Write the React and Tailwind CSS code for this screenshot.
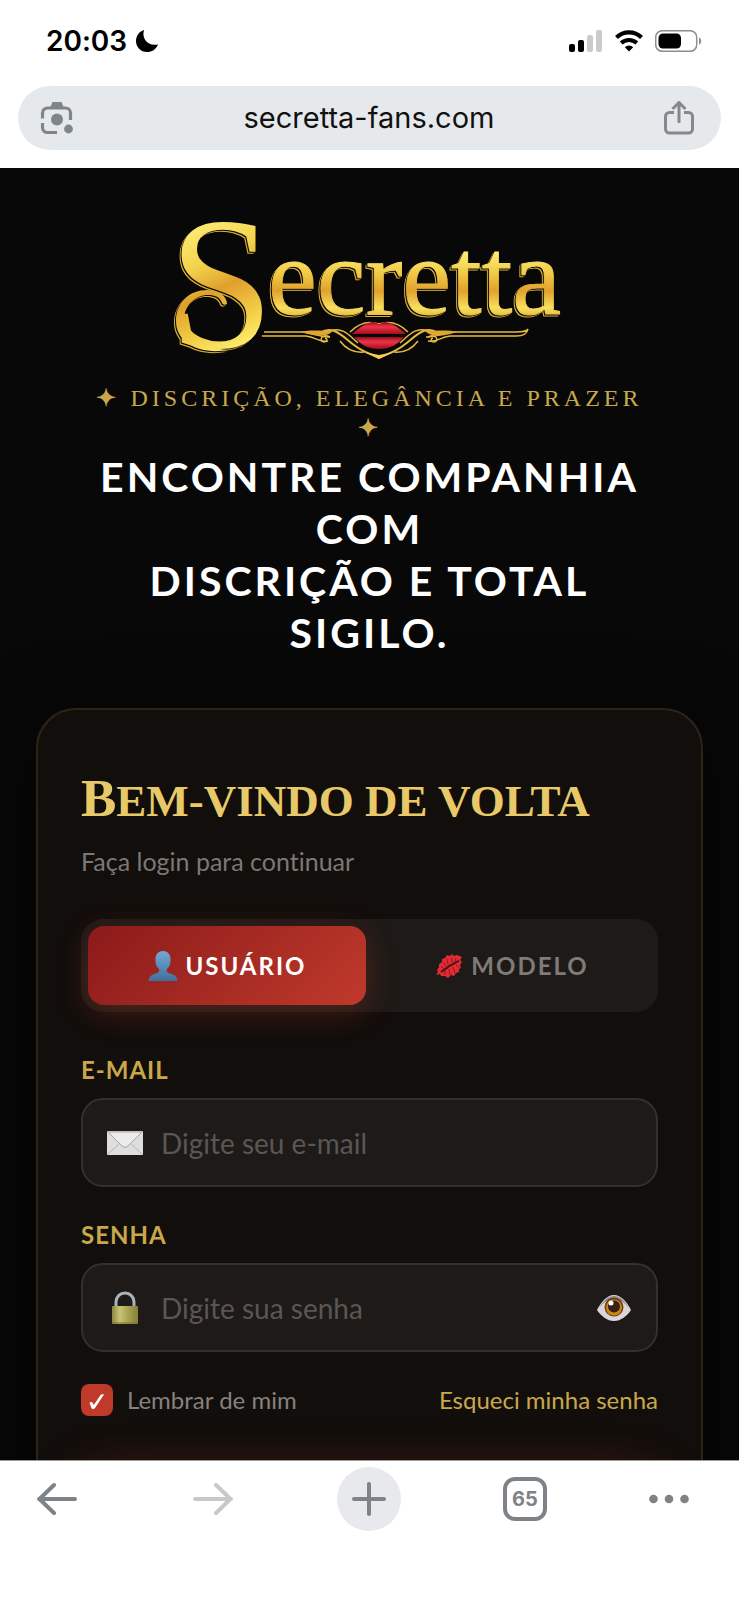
import { useState } from 'react'

const MoonIcon = () => (
  <svg width="24" height="24" viewBox="0 0 24 24" aria-hidden="true">
    <path d="M9 1C6.500 9 12 17.500 23 15.500C21 20.500 17 23 12 23C5.500 23 1 18 1 12C1 7 4 2.500 9 1Z" fill="#000" />
  </svg>
)

const StatusIcons = () => (
  <div className="flex items-center gap-3">
    <svg width="34" height="22" viewBox="0 0 34 22" aria-hidden="true">
      <rect x="0" y="14" width="6" height="8" rx="2" fill="#000" />
      <rect x="9" y="10" width="6" height="12" rx="2" fill="#000" />
      <rect x="18" y="5" width="6" height="17" rx="2" fill="#cbcbcb" />
      <rect x="27" y="0" width="6" height="22" rx="2" fill="#cbcbcb" />
    </svg>
    <svg width="28" height="22" viewBox="0 0 28 22" fill="none" aria-hidden="true">
      <path d="M1.500 7.500a18 18 0 0 1 25 0" stroke="#000" strokeWidth="4.200" />
      <path d="M6.200 13a11.300 11.300 0 0 1 15.600 0" stroke="#000" strokeWidth="4" />
      <path d="M14 21.500l-4.200-4.200a6 6 0 0 1 8.400 0z" fill="#000" />
    </svg>
    <svg width="48" height="22" viewBox="0 0 48 22" fill="none" aria-hidden="true">
      <rect x="0.700" y="0.700" width="41" height="20.600" rx="6.500" stroke="#8e8e8e" strokeWidth="1.500" />
      <rect x="3.500" y="3.500" width="22.500" height="15" rx="4.500" fill="#000" />
      <path d="M44 7.500c3 1 3 6 0 7z" fill="#8e8e8e" />
    </svg>
  </div>
)

const LensIcon = () => (
  <svg width="34" height="34" viewBox="0 0 34 34" fill="none" aria-hidden="true">
    <path d="M2.500 17.500v-5.500a5 5 0 0 1 5-5h18a5 5 0 0 1 5 5V19" stroke="#7f868b" strokeWidth="3.200" />
    <path d="M2.500 22v4.500a5 5 0 0 0 5 5H17" stroke="#7f868b" strokeWidth="3.200" />
    <path d="M10 7l2.500-6h9L24 7z" fill="#7f868b" />
    <circle cx="17" cy="18.500" r="6" fill="#7f868b" />
    <circle cx="28.500" cy="28" r="4.400" fill="#7f868b" />
  </svg>
)

const ShareIcon = () => (
  <svg width="30" height="34" viewBox="0 0 30 34" fill="none" stroke="#85898d" strokeWidth="3" aria-hidden="true">
    <path d="M10 11.500H5.500a4 4 0 0 0-4 4V28a4 4 0 0 0 4 4h19a4 4 0 0 0 4-4V15.500a4 4 0 0 0-4-4H20" />
    <path d="M15 22V2.500M8.500 8L15 1.500l6.500 6.500" />
  </svg>
)

const Logo = () => (
  <svg width="420" height="180" viewBox="0 0 420 180" role="img" aria-label="Secretta" className="max-w-full overflow-visible">
    <defs>
      <linearGradient id="goldBig" gradientUnits="userSpaceOnUse" x1="20" y1="20" x2="80" y2="150">
        <stop offset="0" stopColor="#fff27d" />
        <stop offset="0.350" stopColor="#f3d24d" />
        <stop offset="0.550" stopColor="#dfa02c" />
        <stop offset="0.800" stopColor="#f3cf48" />
        <stop offset="1" stopColor="#ffef72" />
      </linearGradient>
      <linearGradient id="gold" gradientUnits="userSpaceOnUse" x1="0" y1="50" x2="0" y2="118">
        <stop offset="0" stopColor="#fff27d" />
        <stop offset="0.350" stopColor="#f0c945" />
        <stop offset="0.600" stopColor="#e0a22e" />
        <stop offset="0.850" stopColor="#f8df5c" />
        <stop offset="1" stopColor="#e5b53c" />
      </linearGradient>
      <linearGradient id="lip" x1="0" y1="0" x2="0" y2="1">
        <stop offset="0" stopColor="#8e0f1c" />
        <stop offset="0.400" stopColor="#f0344a" />
        <stop offset="1" stopColor="#a30d1c" />
      </linearGradient>
    </defs>
    <g className="[filter:drop-shadow(-1px_1px_0_#0a0a0a)_drop-shadow(-1px_1px_0_#d8ac38)]">
      <text x="9" y="147" className="font-['Liberation_Serif',serif] text-[188px]" fill="url(#goldBig)">
        S<tspan x="108" y="114" className="text-[110px]" fill="url(#gold)" stroke="url(#gold)" strokeWidth="1">ecretta</tspan>
      </text>
      {/* curl that closes the lower end of the initial */}
      <path d="M68 150C40 155 16 143 16 121C16 102 30 90 47 90C59 90 67 96 67 104C65 105 63 105 62 103C60 97 55 95 48 95C36 95 24 105 24 120C24 137 41 148 68 150Z" fill="url(#goldBig)" />
    </g>
    <g fill="none" stroke="#e6b93f" strokeWidth="1.500">
      <path d="M104 132H142C154 132 158 138 170 137M102 136H146C156 137 160 143 168 141" />
      <path d="M368 129C366 132 362 132 356 132H294C282 132 278 138 266 137M368 129C367 135 362 136 356 136H290C280 137 276 143 268 141" />
      <path d="M160 133C174 124 184 138 194 145C204 153 212 154 219 158C226 154 234 153 244 145C254 138 264 124 278 133" strokeWidth="2" />
      <path d="M170 131C182 126 190 136 198 143M268 131C256 126 248 136 240 143" />
      <path d="M190 132C200 122 210 121 219 124C228 121 238 122 248 132" />
      <path d="M170 137c-8-4-12 4-6 5c3 0 4-3 1-4M268 137c8-4 12 4 6 5c-3 0-4-3-1-4" />
      <path d="M180 141c6 8 14 12 24 11M258 141c-6 8-14 12-24 11" />
    </g>
    <path d="M140 132C154 129 162 132 174 130C166 138 158 137 140 132Z" fill="#dca832" />
    <path d="M298 132C284 129 276 132 264 130C272 138 280 137 298 132Z" fill="#dca832" />
    <path d="M204 152L219 155L234 152L219 159Z" fill="#f6cf4e" />
    <path d="M192 134C200 127 207 122 213 122C216 122 218 124 219 124C220 124 222 122 225 122C231 122 238 127 246 134Z" fill="url(#lip)" />
    <path d="M194 137H244C237 145 230 149 219 149C208 149 201 145 194 137Z" fill="url(#lip)" />
  </svg>
)

const PersonIcon = () => (
  <svg width="30" height="30" viewBox="0 0 30 30" aria-hidden="true">
    <defs>
      <linearGradient id="person" x1="0" y1="0" x2="0" y2="1">
        <stop offset="0" stopColor="#74a9d2" />
        <stop offset="1" stopColor="#3f6f9e" />
      </linearGradient>
    </defs>
    <path d="M15 0c5 0 8 4 7.500 9c0 5-1.500 7-3.500 9c-1 2 0 4 3 4.500c4 1 7 2.500 7.500 7.500h-29c.500-5 3.500-6.500 7.500-7.500c3-.500 4-2.500 3-4.500c-2-2-3.500-4-3.500-9C7 4 10 0 15 0z" fill="url(#person)" />
  </svg>
)

const KissIcon = () => (
  <svg width="28" height="24" viewBox="0 0 28 24" aria-hidden="true">
    <path d="M1 21L3 18L2 16L4 13L4 10L7 8L7 5L10 4L12 1L15 2L17 0L19 2L22 1L27 3L25 6L27 8L25 11L26 14L24 15L24 18L21 19L19 22L16 21L13 24L10 22L6 22L5 20Z" fill="#e02b35" />
    <path d="M6 18C10 15 11 15 14 12C18 11 20 8 24 7" stroke="#4a1416" strokeWidth="2" fill="none" />
    <path d="M8 8l3 4M12 5l1 5M17 4v5M21 4l-1 4M10 17v4M14 15l1 6M18 13l2 6M21 11l3 3M6 12l3 3" stroke="#8e1720" strokeWidth="1" />
  </svg>
)

const EnvelopeIcon = () => (
  <svg width="36" height="24" viewBox="0 0 36 24" fill="none" aria-hidden="true">
    <rect width="36" height="24" rx="1" fill="#dedede" />
    <path d="M1 23l12-11M35 23L23 12" stroke="#b5b5b5" />
    <path d="M1 1l14 14q3 3 6 0L35 1z" fill="#ececec" stroke="#a5a5a5" />
  </svg>
)

const LockIcon = () => (
  <svg width="36" height="34" viewBox="0 0 36 34" fill="none" aria-hidden="true">
    <defs>
      <linearGradient id="lock" x1="0" y1="0" x2="1" y2="0">
        <stop offset="0" stopColor="#8c8742" />
        <stop offset="0.300" stopColor="#c9c377" />
        <stop offset="0.600" stopColor="#aaa455" />
        <stop offset="1" stopColor="#86803a" />
      </linearGradient>
    </defs>
    <path d="M9 16v-5a9 9 0 0 1 18 0v5" stroke="#a9b4be" strokeWidth="3" />
    <rect x="5" y="15" width="26" height="18" rx="1" fill="url(#lock)" />
    <path d="M5 32h26" stroke="#7c6f2c" />
  </svg>
)

const EyeIcon = () => (
  <svg width="36" height="28" viewBox="0 0 36 28" aria-hidden="true">
    <path d="M1 16C5 8 11 1 18 1C25 1 31 8 35 16C31 22 25 27 18 27C11 27 5 22 1 16Z" fill="#ddd5da" />
    <path d="M3 14C7 7 12 2 18 2C24 2 29 7 33 14C28 8 24 5 18 5C12 5 8 8 3 14Z" fill="#8d8590" />
    <circle cx="18" cy="13" r="9.500" fill="#6b4210" />
    <circle cx="18" cy="13.500" r="8" fill="#c58a14" />
    <circle cx="18" cy="12.500" r="6" fill="#3a2018" />
    <circle cx="15" cy="9" r="2.500" fill="#fff" />
  </svg>
)

const Field = ({ id, label, icon, type, placeholder, children }) => (
  <div className="flex flex-col gap-3">
    <label htmlFor={id} className="text-2xl leading-8 font-bold uppercase tracking-[1px] text-[#c9a84c]">{label}</label>
    <div className="flex h-[89px] items-center gap-[18px] rounded-[22px] border-2 border-[#33302d] bg-[#1e1a17] px-6">
      {icon}
      <input id={id} type={type} placeholder={placeholder} className="min-w-0 flex-1 bg-transparent text-[28px] text-white outline-none placeholder:text-[#5a5655]" />
      {children}
    </div>
  </div>
)

const App = () => {
  const [role, setRole] = useState('user')
  const [remember, setRemember] = useState(true)
  const [showPassword, setShowPassword] = useState(false)

  const active = 'bg-linear-135 from-[#8b1a1a] to-[#c0392b] text-white shadow-[0_8px_30px_rgba(192,57,43,0.3)]'
  const idle = 'text-[#7f7b79]'

  return (
    <div className="flex h-screen flex-col overflow-hidden bg-white font-['Lato',sans-serif] [font-variant-ligatures:none]">
      <header className="px-[18px] pb-[18px] font-['Inter',sans-serif]">
        <div className="flex h-[86px] items-center justify-between pr-[18px] pb-1 pl-7">
          <div className="flex items-center gap-2 text-[28px] font-semibold text-black">
            20:03
            <MoonIcon />
          </div>
          <StatusIcons />
        </div>
        <div className="flex h-16 items-center justify-between rounded-full bg-[#e5e9ec] pr-[27px] pl-[22px]">
          <button aria-label="Lens"><LensIcon /></button>
          <span className="text-[29px] text-[#111]">secretta-fans.com</span>
          <button aria-label="Compartilhar"><ShareIcon /></button>
        </div>
      </header>

      <main className="min-h-0 flex-1 overflow-hidden bg-[#080808] px-9 pt-8">
        <section className="flex flex-col items-center px-11 text-center">
          <Logo />
          <p className="mt-[3px] font-['Liberation_Serif',serif] text-2xl leading-[30px] tracking-[4px] text-[#c9a84c] uppercase">
            <b>✦</b> Discrição, elegância e prazer <b>✦</b>
          </p>
          <h2 className="mt-2 text-[41px] leading-[52px] font-bold tracking-[3px] text-white uppercase">
            Encontre companhia com<br />discrição e total sigilo.
          </h2>
        </section>

        <section className="mt-[49px] rounded-[40px] border-2 border-[#2e2415] bg-[#120e0b] px-[43px] pt-14 shadow-[0_20px_80px_rgba(0,0,0,0.8)]">
          <h1 className="font-['Liberation_Serif',serif] text-[45px] leading-16 font-bold text-[#e8c96a] uppercase first-letter:text-[53px]">
            Bem-vindo de volta
          </h1>
          <p className="mt-3 text-[25px] leading-8 text-[#7b7876]">Faça login para continuar</p>

          <form onSubmit={(e) => e.preventDefault()}>
            <div role="tablist" className="mt-[42px] grid h-[93px] grid-cols-2 gap-[7px] rounded-[22px] bg-[#1e1a17] p-[7px] text-2xl font-bold tracking-[2px]">
              <button type="button" role="tab" aria-selected={role === 'user'} onClick={() => setRole('user')} className={`flex items-center justify-center gap-2 rounded-[16px] ${role === 'user' ? active : idle}`}>
                <PersonIcon /> USUÁRIO
              </button>
              <button type="button" role="tab" aria-selected={role === 'model'} onClick={() => setRole('model')} className={`flex items-center justify-center gap-2 rounded-[16px] ${role === 'model' ? active : idle}`}>
                <KissIcon /> MODELO
              </button>
            </div>

            <div className="mt-[42px] flex flex-col gap-8">
              <Field id="email" label="E-mail" icon={<EnvelopeIcon />} type="email" placeholder="Digite seu e-mail" />
              <Field id="password" label="Senha" icon={<LockIcon />} type={showPassword ? 'text' : 'password'} placeholder="Digite sua senha">
                <button type="button" aria-label="Mostrar senha" onClick={() => setShowPassword(!showPassword)}><EyeIcon /></button>
              </Field>
            </div>

            <div className="mt-8 flex items-center justify-between text-2xl">
              <label className="flex items-center gap-[14px] text-[#85817f]">
                <span className="relative flex size-8">
                  <input type="checkbox" checked={remember} onChange={() => setRemember(!remember)} className="size-8 appearance-none rounded-lg bg-[#1e1a17] checked:bg-[#c0392b]" />
                  {remember && (
                    <svg viewBox="0 0 32 32" className="pointer-events-none absolute inset-0" aria-hidden="true">
                      <path d="M8.500 19c1-1.500 3-1 3.500.500l.800 1.500L19.500 11c1-1 2.500-.800 3.500-.500L14 24c-1 1.500-3 1.500-3.500 0z" fill="#fff" />
                    </svg>
                  )}
                </span>
                Lembrar de mim
              </label>
              <a href="#" className="text-[#c9a84c]">Esqueci minha senha</a>
            </div>
            <div className="mt-[52px] h-24 rounded-[20px] bg-[#8b1a1a] shadow-[0_8px_50px_rgba(192,57,43,0.4)]" />
          </form>
        </section>
      </main>

      <nav className="flex h-[140px] items-start justify-between border-t border-[#9a9a9a] bg-white pt-[6px] pr-[50px] pl-[25px] text-[#7d8387]">
        <button aria-label="Voltar" className="flex size-16 items-center justify-center">
          <svg width="40" height="34" viewBox="0 0 40 34" fill="none" stroke="currentColor" strokeWidth="4" strokeLinecap="round" strokeLinejoin="round"><path d="M38 17H2M17 3L2.500 17L17 31" /></svg>
        </button>
        <button aria-label="Avançar" className="flex size-16 items-center justify-center text-[#c8c8c8]">
          <svg width="40" height="34" viewBox="0 0 40 34" fill="none" stroke="currentColor" strokeWidth="4" strokeLinecap="round" strokeLinejoin="round"><path d="M2 17H38M23 3L37.500 17L23 31" /></svg>
        </button>
        <button aria-label="Nova aba" className="flex size-16 items-center justify-center rounded-full bg-[#e8e9ed]">
          <svg width="34" height="34" viewBox="0 0 34 34" fill="none" stroke="currentColor" strokeWidth="4" strokeLinecap="round"><path d="M17 2V32M2 17H32" /></svg>
        </button>
        <button aria-label="Abas" className="flex size-16 items-center justify-center">
          <span className="flex size-11 items-center justify-center rounded-xl border-4 border-[#7d8387] font-['Inter',sans-serif] text-xl font-bold">65</span>
        </button>
        <button aria-label="Mais" className="flex h-16 w-10 items-center justify-center">
          <svg width="40" height="10" viewBox="0 0 40 10" fill="currentColor"><circle cx="4.500" cy="5" r="4.300" /><circle cx="20" cy="5" r="4.300" /><circle cx="35.500" cy="5" r="4.300" /></svg>
        </button>
      </nav>
    </div>
  )
}

export default App
